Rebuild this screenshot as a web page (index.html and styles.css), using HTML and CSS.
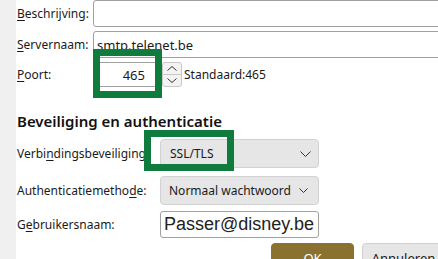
FILE: index.html
```html
<!DOCTYPE html>
<html lang="nl">
<head>
<meta charset="utf-8">
<link rel="stylesheet" href="styles.css">
</head>
<body>
<div class="window">
  <div class="sidebar"></div>
  <div class="main">
    <div class="row r-desc">
      <label class="lbl lbl-short"><u>B</u>eschrijving:</label>
      <div class="input wide"></div>
    </div>
    <div class="row r-srv">
      <label class="lbl lbl-short"><u>S</u>ervernaam:</label>
      <div class="input wide"><span class="val">smtp.telenet.be</span></div>
    </div>
    <div class="row r-port">
      <label class="lbl lbl-short"><u>P</u>oort:</label>
      <div class="input port"><span class="val">465</span></div>
      <div class="spin">
        <svg width="20" height="25" viewBox="0 0 20 25">
          <path d="M5.5 8.5 L10 4.5 L14.5 8.5" fill="none" stroke="#333" stroke-width="1"/>
          <line x1="0" y1="12.5" x2="20" y2="12.5" stroke="#c8c8c8" stroke-width="1"/>
          <path d="M5.5 16.5 L10 20.5 L14.5 16.5" fill="none" stroke="#333" stroke-width="1"/>
        </svg>
      </div>
      <span class="std">Standaard:465</span>
    </div>
    <h2 class="section">Beveiliging en authenticatie</h2>
    <div class="row r-sel1">
      <label class="lbl lbl-long">Verbi<u>n</u>dingsbeveiliging:</label>
      <div class="select"><span class="opt">SSL/TLS</span>
        <svg class="chev" width="11" height="6" viewBox="0 0 11 6"><path d="M0.5 0.5 L5.5 5.5 L10.5 0.5" fill="none" stroke="#333" stroke-width="1"/></svg>
      </div>
    </div>
    <div class="row r-sel2">
      <label class="lbl lbl-long">Authenticatiemetho<u>d</u>e:</label>
      <div class="select"><span class="opt">Normaal wachtwoord</span>
        <svg class="chev" width="9" height="5" viewBox="0 0 9 5"><path d="M0.5 0.5 L4.5 4.5 L8.5 0.5" fill="none" stroke="#333" stroke-width="1"/></svg>
      </div>
    </div>
    <div class="row r-user">
      <label class="lbl lbl-long">G<u>e</u>bruikersnaam:</label>
      <div class="input user"><span class="val">Passer@disney.be</span></div>
    </div>
    <div class="buttons">
      <button class="btn primary">OK</button>
      <button class="btn">Annuleren</button>
    </div>
  </div>
  <div class="mark mark-port"></div>
  <div class="mark mark-sec"></div>
</div>
</body>
</html>
```
FILE: styles.css
```css
html, body {
  margin: 0;
  padding: 0;
  background: #fff;
}
body {
  width: 438px;
  height: 259px;
  overflow: hidden;
  font-family: "Noto Sans", "Open Sans", sans-serif;
  font-size: 12px;
  color: #1a1a1a;
}
.window {
  position: relative;
  display: flex;
  width: 438px;
  height: 259px;
  overflow: hidden;
}
.sidebar {
  width: 16px;
  flex: none;
  background: #f0f0f0;
}
.main {
  flex: 1;
  padding-left: 1px;
  display: flex;
  flex-direction: column;
  min-width: 0;
}
.row {
  display: flex;
  align-items: center;
  flex: none;
}
.lbl {
  flex: none;
  white-space: nowrap;
}
.lbl u {
  text-decoration-thickness: 1px;
  text-underline-offset: 2px;
}
.lbl-short { width: 76px; }
.lbl-long { width: 143px; }
.input {
  box-sizing: border-box;
  background: #fff;
  border: 1px solid #a0a0a0;
  border-radius: 3px;
  display: flex;
  align-items: center;
  flex: none;
}
.wide {
  width: 400px;
  height: 27px;
}
.r-desc { margin-top: 0; height: 27px; }
.r-srv { margin-top: 4px; height: 27px; }
.r-srv .val {
  padding-left: 3px;
  font-size: 13px;
}
.r-port { margin-top: 4px; height: 25px; }
.port {
  width: 66px;
  height: 25px;
  justify-content: flex-end;
  padding-right: 13px;
  font-size: 13px;
}
.spin {
  box-sizing: border-box;
  width: 20px;
  height: 25px;
  margin-left: 3px;
  border: 1px solid #c8c8c8;
  border-radius: 3px;
  background: #f3f3f3;
  display: flex;
}
.spin svg { margin: -1px; }
.std {
  margin-left: 2px;
  font-size: 12px;
}
.section {
  margin: 24px 0 8px 0;
  height: 20px;
  line-height: 20px;
  font-size: 15px;
  font-weight: 600;
  color: #111;
  flex: none;
}
.r-sel1 { height: 29px; }
.r-sel2 { margin-top: 8px; height: 29px; }
.select {
  box-sizing: border-box;
  width: 159px;
  height: 29px;
  background: #e6e6e6;
  border: 1px solid #d2d2d2;
  border-radius: 4px;
  display: flex;
  align-items: center;
  justify-content: space-between;
  padding: 0 7px 0 9px;
  flex: none;
}
.r-sel2 .select { padding-left: 8px; padding-right: 10px; }
.opt {
  font-size: 12px;
  color: #1a1a1a;
}
.chev { flex: none; }
.r-user { margin-top: 6px; height: 27px; }
.user {
  width: 159px;
  height: 27px;
  padding-left: 3px;
  font-family: "Liberation Sans", Arial, sans-serif;
  font-size: 18px;
  color: #222;
}
.buttons {
  display: flex;
  gap: 8px;
  margin-top: 5px;
  padding-left: 254px;
  flex: none;
}
.btn {
  box-sizing: border-box;
  width: 83px;
  height: 30px;
  border-radius: 4px;
  border: 1px solid #d0d0d0;
  background: #e6e6e6;
  color: #1a1a1a;
  font-family: "Noto Sans", sans-serif;
  font-size: 13px;
  padding: 0;
  flex: none;
}
.btn.primary {
  background: #8b712f;
  border-color: #8b712f;
  color: #fff;
}
.mark {
  position: absolute;
  box-sizing: border-box;
  border: 7px solid #0f7b3c;
}
.mark-port {
  left: 93px;
  top: 49px;
  width: 69px;
  height: 49px;
}
.mark-sec {
  left: 144px;
  top: 130px;
  width: 90px;
  height: 41px;
}
```
